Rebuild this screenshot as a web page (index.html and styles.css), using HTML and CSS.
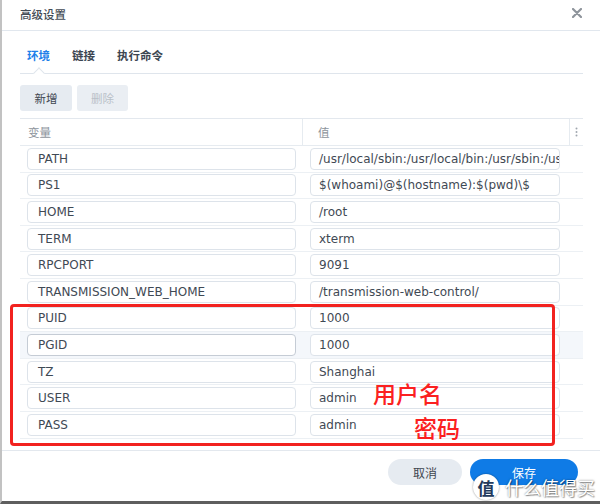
FILE: index.html
```html
<!DOCTYPE html>
<html lang="zh-CN">
<head>
    <meta charset="UTF-8">
    <title>高级设置</title>
    <link rel="stylesheet" href="styles.css">
</head>
<body>

<div class="dialog">
    <div class="dlg-head">
        <span class="dlg-title">高级设置</span>
        <svg class="dlg-close" width="10" height="10" viewBox="0 0 10 10">
            <path d="M1 1 L9 9 M9 1 L1 9" stroke="#8e949b" stroke-width="2.2" stroke-linecap="round"/>
        </svg>
    </div>

    <div class="dlg-body">
        <div class="tabs">
            <span class="tab active">环境</span>
            <span class="tab">链接</span>
            <span class="tab">执行命令</span>
        </div>

        <div class="toolbar">
            <button class="btn">新增</button>
            <button class="btn disabled">删除</button>
        </div>

        <div class="grid">
            <div class="grid-head">
                <div class="head-cell">变量</div>
                <div class="head-cell">值</div>
                <div class="head-cell menu">
                    <svg width="3" height="10" viewBox="0 0 3 10">
                        <circle cx="1.5" cy="1.5" r="1" fill="#a0a7af"/>
                        <circle cx="1.5" cy="5" r="1" fill="#a0a7af"/>
                        <circle cx="1.5" cy="8.5" r="1" fill="#a0a7af"/>
                    </svg>
                </div>
            </div>

            <div class="grid-row">
                <div class="cell-name"><div class="field">PATH</div></div>
                <div class="cell-val"><div class="field">/usr/local/sbin:/usr/local/bin:/usr/sbin:/usr/bin:/sbin:/bin</div></div>
            </div>
            <div class="grid-row">
                <div class="cell-name"><div class="field">PS1</div></div>
                <div class="cell-val"><div class="field">$(whoami)@$(hostname):$(pwd)\$</div></div>
            </div>
            <div class="grid-row">
                <div class="cell-name"><div class="field">HOME</div></div>
                <div class="cell-val"><div class="field">/root</div></div>
            </div>
            <div class="grid-row">
                <div class="cell-name"><div class="field">TERM</div></div>
                <div class="cell-val"><div class="field">xterm</div></div>
            </div>
            <div class="grid-row">
                <div class="cell-name"><div class="field">RPCPORT</div></div>
                <div class="cell-val"><div class="field">9091</div></div>
            </div>
            <div class="grid-row">
                <div class="cell-name"><div class="field">TRANSMISSION_WEB_HOME</div></div>
                <div class="cell-val"><div class="field">/transmission-web-control/</div></div>
            </div>
            <div class="grid-row">
                <div class="cell-name"><div class="field">PUID</div></div>
                <div class="cell-val"><div class="field">1000</div></div>
            </div>
            <div class="grid-row hover">
                <div class="cell-name"><div class="field focus">PGID</div></div>
                <div class="cell-val"><div class="field">1000</div></div>
            </div>
            <div class="grid-row">
                <div class="cell-name"><div class="field">TZ</div></div>
                <div class="cell-val"><div class="field">Shanghai</div></div>
            </div>
            <div class="grid-row">
                <div class="cell-name"><div class="field">USER</div></div>
                <div class="cell-val"><div class="field">admin</div></div>
            </div>
            <div class="grid-row">
                <div class="cell-name"><div class="field">PASS</div></div>
                <div class="cell-val"><div class="field">admin</div></div>
            </div>
        </div>
    </div>

    <div class="dlg-foot">
        <button class="pill">取消</button>
        <button class="pill primary">保存</button>
    </div>

    <!-- 标注 -->
    <div class="mark-box"></div>
    <div class="mark-text user">用户名</div>
    <div class="mark-text pass">密码</div>

    <!-- 水印 -->
    <div class="watermark">
        <span class="wm-logo">值</span>
        <span class="wm-text">什么值得买</span>
    </div>
</div>

</body>
</html>
```

FILE: styles.css
```css
body {
    margin: 0;
    background-color: #ffffff;
    font-family: "DejaVu Sans", "Noto Sans CJK SC", sans-serif;
}

.dialog {
    position: relative;
    width: 600px;
    height: 504px;
    box-sizing: border-box;
    display: flex;
    flex-direction: column;
    background-color: #ffffff;
    border-left: 2px solid #c2c2c2;
    border-bottom: 3px solid #5e5e5e;
    overflow: hidden;
}

/* 标题栏 */
.dlg-head {
    height: 30px;
    flex-shrink: 0;
    display: flex;
    align-items: center;
    justify-content: space-between;
    padding: 0 18px 0 18px;
    border-bottom: 1px solid #e1e7ee;
}

.dlg-title {
    font-family: "Noto Sans CJK SC", sans-serif;
    font-size: 11.5px;
    font-weight: 500;
    color: #434b55;
    margin-top: -3px;
}

.dlg-close {
    margin-top: -4px;
}

.dlg-body {
    flex: 1;
    padding: 0 17px 0 18px;
}

/* 标签页 */
.tabs {
    height: 42px;
    display: flex;
    gap: 22px;
    padding-left: 7px;
    border-bottom: 1px solid #dfe5ec;
}

.tab {
    position: relative;
    padding-top: 16px;
    font-family: "Noto Sans CJK SC", sans-serif;
    font-size: 11.5px;
    font-weight: bold;
    line-height: 16px;
    color: #3c4651;
}

.tab.active {
    color: #1f7fe9;
}

.tab.active::after {
    content: "";
    position: absolute;
    left: 50%;
    bottom: -4px;
    width: 7px;
    height: 7px;
    margin-left: -4px;
    background-color: #ffffff;
    border-left: 1px solid #dfe5ec;
    border-top: 1px solid #dfe5ec;
    transform: rotate(45deg);
}

/* 工具栏 */
.toolbar {
    display: flex;
    gap: 5px;
    margin-top: 11px;
}

.btn {
    width: 52px;
    height: 26px;
    border: none;
    border-radius: 3px;
    background-color: #e6ebf1;
    font-family: "Noto Sans CJK SC", sans-serif;
    font-size: 11.5px;
    color: #3e4650;
    padding: 0;
}

.btn.disabled {
    width: 51px;
    background-color: #eaeef3;
    color: #b9c0c8;
}

/* 表格 */
.grid {
    margin-top: 7px;
    border-top: 1px solid #e3e8ee;
}

.grid-head,
.grid-row {
    display: grid;
    grid-template-columns: 283px 267px 13px;
}

.grid-head {
    height: 26px;
    border-bottom: 1px solid #e6ebf0;
}

.head-cell {
    display: flex;
    align-items: center;
    padding-left: 8px;
    font-family: "Noto Sans CJK SC", sans-serif;
    font-size: 11.5px;
    color: #8d949c;
    border-right: 1px solid #e6ebf0;
}

.head-cell:nth-child(2) {
    padding-left: 15px;
}

.head-cell.menu {
    border-right: none;
    padding-left: 5px;
}

.grid-row {
    height: 25.6px;
    border-bottom: 1px solid #ecf0f4;
}

.grid-row.hover {
    background-color: #f4f7fb;
}

.cell-name,
.cell-val {
    display: flex;
    align-items: center;
    min-width: 0;
}

.cell-name {
    padding: 0 7px;
}

.cell-val {
    padding: 0 10px 0 7px;
}

.field {
    flex: 1;
    min-width: 0;
    height: 22px;
    box-sizing: border-box;
    border: 1px solid #dde3ea;
    border-radius: 4px;
    background-color: #ffffff;
    padding: 0 8px;
    font-size: 12px;
    line-height: 20px;
    color: #3f4954;
    white-space: nowrap;
    overflow: hidden;
}

.cell-name .field {
    padding-left: 10px;
}

.field.focus {
    border-color: #c5ccd5;
}

/* 底部按钮 */
.dlg-foot {
    height: 42px;
    flex-shrink: 0;
    display: flex;
    justify-content: flex-end;
    align-items: flex-start;
    gap: 8px;
    padding: 8px 22px 0 0;
    border-top: 1px solid #e3e8ee;
}

.pill {
    width: 74px;
    height: 26px;
    border: none;
    border-radius: 13px;
    background-color: #e6ebf1;
    font-family: "Noto Sans CJK SC", sans-serif;
    font-size: 12px;
    color: #3e4650;
    padding: 0;
}

.pill.primary {
    width: 108px;
    background-color: #0f7be6;
    color: #ffffff;
}

/* 红色标注 */
.mark-box {
    position: absolute;
    left: 8px;
    top: 304px;
    width: 545px;
    height: 142px;
    box-sizing: border-box;
    border: 3px solid #f2221f;
    border-radius: 4px;
}

.mark-text {
    position: absolute;
    font-family: "Noto Sans CJK SC", sans-serif;
    font-size: 23px;
    font-weight: 500;
    line-height: 26px;
    color: #fb2020;
}

.mark-text.user {
    left: 371px;
    top: 380px;
}

.mark-text.pass {
    left: 412px;
    top: 414px;
}

/* 水印 */
.watermark {
    position: absolute;
    left: 471px;
    top: 474px;
    display: flex;
    align-items: center;
    gap: 6px;
}

.wm-logo {
    width: 26px;
    height: 26px;
    border-radius: 50%;
    background-color: #ffffff;
    box-shadow: 0 0 2px rgba(0, 0, 0, 0.45);
    display: flex;
    align-items: center;
    justify-content: center;
    font-family: "Noto Sans CJK SC", sans-serif;
    font-size: 17px;
    font-weight: bold;
    color: #233a5c;
}

.wm-text {
    font-family: "Noto Sans CJK SC", sans-serif;
    font-size: 18px;
    color: #ffffff;
    text-shadow: 0 0 2px rgba(0, 0, 0, 0.55), 1px 1px 1px rgba(0, 0, 0, 0.35);
}
```
